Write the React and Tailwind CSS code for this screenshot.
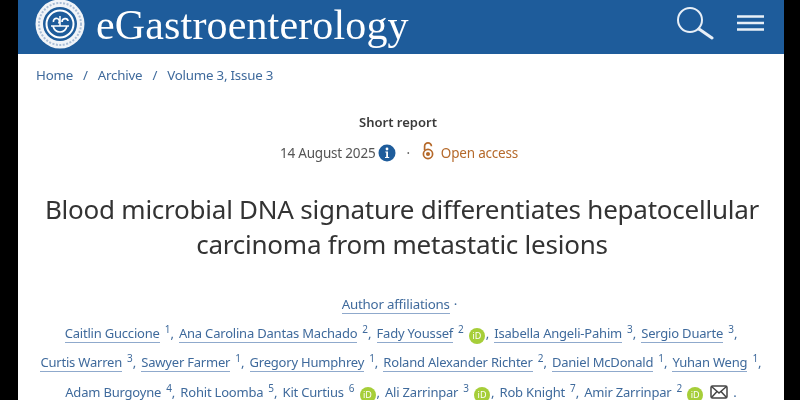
import React from 'react';

const A = ({ children }) => (
    <a className="text-[#3f6a9c] border-b border-[#8fa9cc] leading-[16px] tracking-[-0.2px]">{children}</a>
);

const Sup = ({ children }) => (
    <span className="align-[5px] leading-none text-[10px] text-[#3f6a9c] ml-[5px]">{children}</span>
);

const Orcid = () => (
    <span className="inline-flex items-center justify-center w-[16px] h-[16px] rounded-full bg-[#a6ce39] text-white text-[9px] leading-none ml-[5px] mr-[1px] align-[-1px]">
        iD
    </span>
);

const Sep = () => <span className="text-[#3f6a9c] mr-[5px]">,</span>;

const Logo = () => (
    <svg width="50" height="50" viewBox="0 0 50 50" fill="none" className="mb-[7px]">
        <circle cx="25" cy="25" r="24.5" fill="#f1f4f8" />
        <circle cx="25" cy="25" r="21" stroke="#a9bdd6" strokeWidth="2" strokeDasharray="2 1.5" />
        <circle cx="25" cy="25" r="17" fill="#1e5c9b" />
        <circle cx="25" cy="25" r="13.5" stroke="#ffffff" strokeWidth="2" />
        <path d="M16 27h18M18 27c1 4 4 6 7 6s6-2 7-6M18.500 23a3 3 0 1 1 5 1.500M27 23c0-4 5.500-4.500 6-1" stroke="#ffffff" strokeWidth="1.7" />
        <path d="M25 17v10" stroke="#ffffff" strokeWidth="1.5" />
    </svg>
);

export default function App() {
    return (
        <div className="h-[400px] overflow-hidden bg-black pl-[18px] pr-[16px] font-['Noto_Sans',sans-serif]">
            <div className="h-full bg-white overflow-hidden blur-[0.4px]">
                <header className="h-[54px] bg-[#1e5c9b] flex items-center pl-[17px] pr-[20px]">
                    <Logo />
                    <span className="ml-[11px] text-[42px] leading-none text-white font-['Liberation_Serif',serif] tracking-[0.15px] pb-[4px]">
                        eGastroenterology
                    </span>
                    <div className="ml-auto flex items-center gap-[23px] mb-[8px]">
                        <svg width="38" height="38" viewBox="0 0 38 38" fill="none" stroke="#e8eff7" strokeLinecap="round">
                            <circle cx="14" cy="16" r="12" strokeWidth="2" />
                            <path d="M23 25l13 9" strokeWidth="3" />
                        </svg>
                        <svg width="27" height="20" viewBox="0 0 27 20" fill="none" stroke="#e8eff7" strokeWidth="2.4">
                            <path d="M0 3.500h27M0 10h27M0 16.500h27" />
                        </svg>
                    </div>
                </header>

                <nav className="mt-[12px] pl-[18px] flex items-center gap-[10px] text-[13.3px] leading-[18px] text-[#3f6a9c] tracking-[-0.2px]">
                    <span>Home</span>
                    <span>/</span>
                    <span>Archive</span>
                    <span>/</span>
                    <span>Volume 3, Issue 3</span>
                </nav>

                <div className="mt-[29px] pr-[6px] text-center text-[13px] leading-[18px] font-semibold text-[#3a3a3a]">Short report</div>

                <div className="mt-[13px] h-[18px] pr-[4px] flex items-center justify-center text-[13.5px] leading-[18px] tracking-[-0.2px]">
                    <span className="text-[#555555]">14 August 2025</span>
                    <svg width="18" height="18" viewBox="0 0 18 18" className="ml-[3px]">
                        <circle cx="9" cy="9" r="8.500" fill="#1e5c9b" />
                        <circle cx="9" cy="5" r="1.400" fill="#ffffff" />
                        <path d="M7.300 7.500h2.700v5.500h1.200v1H7v-1h1.200V8.500H7.300z" fill="#ffffff" />
                    </svg>
                    <span className="ml-[10px] mr-[12px] text-[#666666]">·</span>
                    <svg width="12" height="20" viewBox="0 0 12 20" fill="none" stroke="#b5692a" strokeWidth="1.7" className="mb-[5px]">
                        <circle cx="6" cy="13" r="4.600" />
                        <circle cx="6" cy="13" r="1.200" fill="#b5692a" />
                        <path d="M2.600 9V5.200a3.400 3.400 0 0 1 6.800 0" />
                    </svg>
                    <span className="ml-[7px] text-[#b5692a]">Open access</span>
                </div>

                <h1 className="mt-[30px] pl-[2px] text-center text-[26px] leading-[35px] font-normal text-[#333333] tracking-[-0.24px]">
                    <div>Blood microbial DNA signature differentiates hepatocellular</div>
                    <div>carcinoma from metastatic lesions</div>
                </h1>

                <div className="mt-[33px] pr-[3px] text-center text-[13.3px] leading-[18px] text-[#3f6a9c]">
                    <A>Author affiliations</A>
                    <span className="ml-[4px]">·</span>
                </div>

                <div className="text-center text-[13px] mt-[11px]">
                    <div className="h-[29px] leading-[18px]">
                        <A>Caitlin Guccione</A><Sup>1</Sup><Sep />
                        <A>Ana Carolina Dantas Machado</A><Sup>2</Sup><Sep />
                        <A>Fady Youssef</A><Sup>2</Sup><Orcid /><Sep />
                        <A>Isabella Angeli-Pahim</A><Sup>3</Sup><Sep />
                        <A>Sergio Duarte</A><Sup>3</Sup><span className="text-[#3f6a9c]">,</span>
                    </div>
                    <div className="h-[30px] leading-[18px]">
                        <A>Curtis Warren</A><Sup>3</Sup><Sep />
                        <A>Sawyer Farmer</A><Sup>1</Sup><Sep />
                        <A>Gregory Humphrey</A><Sup>1</Sup><Sep />
                        <A>Roland Alexander Richter</A><Sup>2</Sup><Sep />
                        <A>Daniel McDonald</A><Sup>1</Sup><Sep />
                        <A>Yuhan Weng</A><Sup>1</Sup><span className="text-[#3f6a9c]">,</span>
                    </div>
                    <div className="leading-[18px]">
                        <A>Adam Burgoyne</A><Sup>4</Sup><Sep />
                        <A>Rohit Loomba</A><Sup>5</Sup><Sep />
                        <A>Kit Curtius</A><Sup>6</Sup><Orcid /><Sep />
                        <A>Ali Zarrinpar</A><Sup>3</Sup><Orcid /><Sep />
                        <A>Rob Knight</A><Sup>7</Sup><Sep />
                        <A>Amir Zarrinpar</A><Sup>2</Sup><Orcid />
                        <svg width="18" height="14" viewBox="0 0 18 14" fill="none" stroke="#444444" strokeWidth="1.500" className="inline ml-[6px] align-[-2px]">
                            <rect x="1" y="1" width="16" height="12" rx="1.500" />
                            <path d="M1.500 1.500L9 8l7.500-6.500M1.500 12.500L7 6.500M16.500 12.500L11 6.500" />
                        </svg>
                        <span className="ml-[5px] text-[#3f6a9c]">.</span>
                    </div>
                </div>
            </div>
        </div>
    );
}
